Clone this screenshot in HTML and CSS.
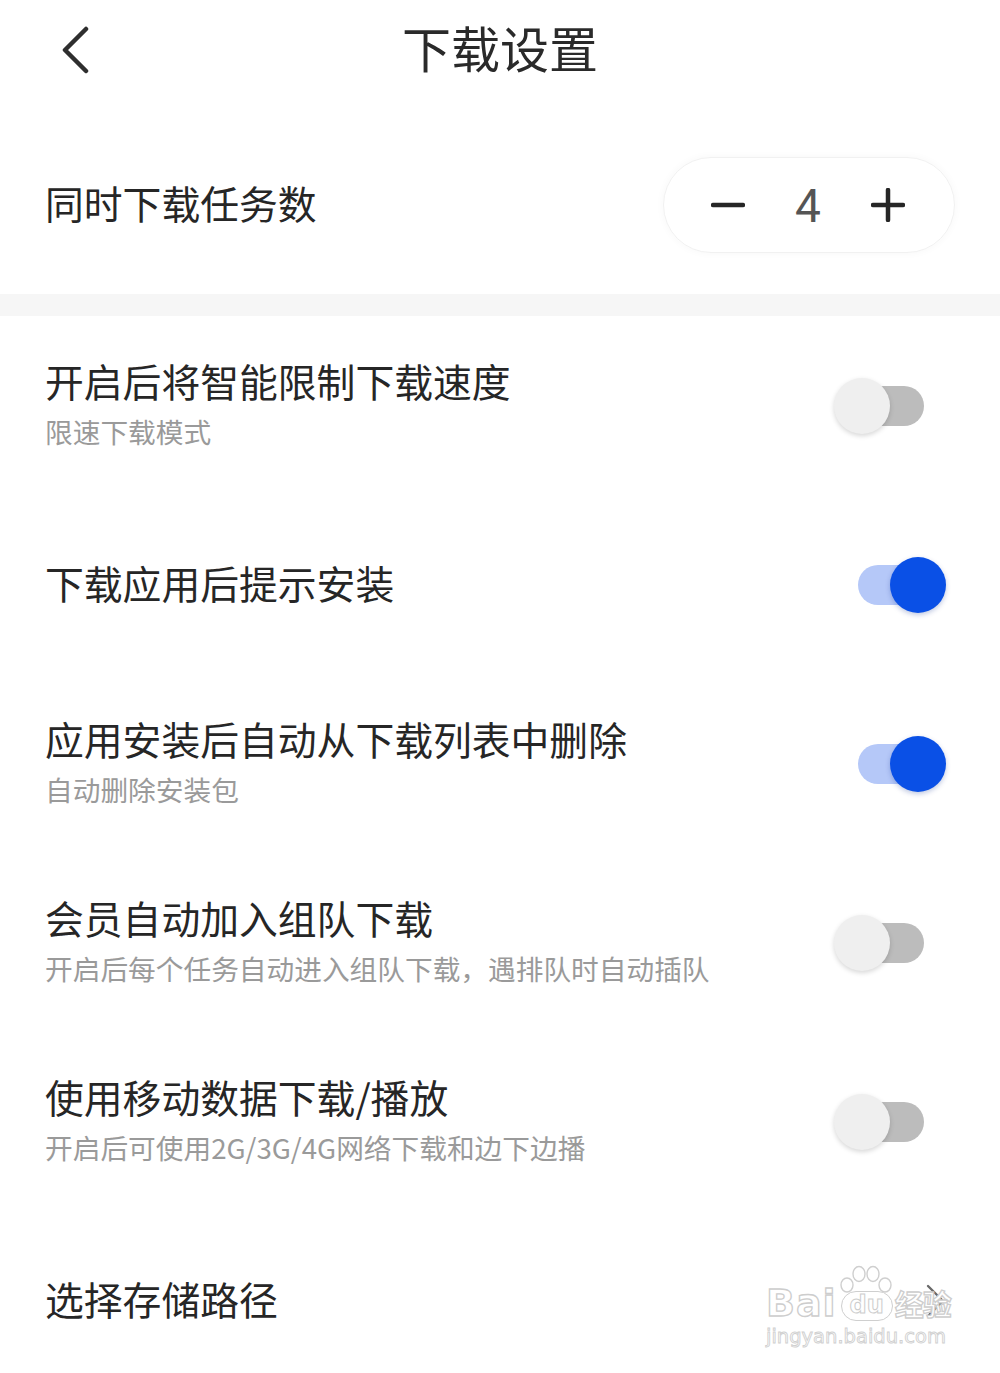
FILE: index.html
```html
<!DOCTYPE html>
<html lang="zh-CN">
<head>
<meta charset="utf-8">
<title>下载设置</title>
<link rel="stylesheet" href="styles.css">
</head>
<body>
<div class="page">
  <header class="topbar">
    <div class="back">
      <svg width="30" height="48" viewBox="0 0 30 48"><path d="M26 3 L5 24 L26 45" fill="none" stroke="#2e2e2e" stroke-width="4.5" stroke-linecap="round" stroke-linejoin="round"/></svg>
    </div>
    <h1 class="title">下载设置</h1>
    <div></div>
  </header>

  <section class="row row-stepper">
    <div class="texts"><div class="label">同时下载任务数</div></div>
    <div class="stepper">
      <svg class="op" width="34" height="34" viewBox="0 0 34 34"><path d="M2 17 H32" stroke="#262626" stroke-width="4.5" stroke-linecap="round"/></svg>
      <span class="count">4</span>
      <svg class="op" width="34" height="34" viewBox="0 0 34 34"><path d="M2 17 H32 M17 2 V32" stroke="#262626" stroke-width="4.5" stroke-linecap="round"/></svg>
    </div>
  </section>

  <div class="divider"></div>

  <section class="row">
    <div class="texts">
      <div class="label">开启后将智能限制下载速度</div>
      <div class="sub">限速下载模式</div>
    </div>
    <div class="toggle"><span class="track"></span><span class="knob"></span></div>
  </section>

  <section class="row">
    <div class="texts">
      <div class="label">下载应用后提示安装</div>
    </div>
    <div class="toggle on"><span class="track"></span><span class="knob"></span></div>
  </section>

  <section class="row">
    <div class="texts">
      <div class="label">应用安装后自动从下载列表中删除</div>
      <div class="sub">自动删除安装包</div>
    </div>
    <div class="toggle on"><span class="track"></span><span class="knob"></span></div>
  </section>

  <section class="row">
    <div class="texts">
      <div class="label">会员自动加入组队下载</div>
      <div class="sub">开启后每个任务自动进入组队下载，遇排队时自动插队</div>
    </div>
    <div class="toggle"><span class="track"></span><span class="knob"></span></div>
  </section>

  <section class="row">
    <div class="texts">
      <div class="label">使用移动数据下载/播放</div>
      <div class="sub">开启后可使用2G/3G/4G网络下载和边下边播</div>
    </div>
    <div class="toggle"><span class="track"></span><span class="knob"></span></div>
  </section>

  <section class="row row-link">
    <div class="texts">
      <div class="label">选择存储路径</div>
    </div>
    <svg class="chev" width="20" height="34" viewBox="0 0 20 34"><path d="M3 2 L18 17 L3 32" fill="none" stroke="#6a6a6a" stroke-width="2.4" stroke-linecap="round" stroke-linejoin="round"/></svg>
    <div class="watermark">
      <div class="wm-top">
        <span class="wm-bai">Bai</span>
        <span class="wm-paw">
          <svg width="58" height="30" viewBox="0 0 58 30"><g fill="#fff" stroke="#cfcfcf" stroke-width="1.4"><ellipse cx="10" cy="20" rx="6" ry="7"/><ellipse cx="22" cy="9" rx="6" ry="7.5"/><ellipse cx="36" cy="9" rx="6" ry="7.5"/><ellipse cx="48" cy="20" rx="6" ry="7"/></g></svg>
          <span class="wm-du">du</span>
        </span>
        <span class="wm-jy">经验</span>
      </div>
      <div class="wm-url">jingyan.baidu.com</div>
    </div>
  </section>
</div>
</body>
</html>
```

FILE: styles.css
```css
* { box-sizing: border-box; }
html, body { margin: 0; padding: 0; background: #fff; }
body {
  font-family: "Noto Sans CJK SC", "Noto Sans", "Liberation Sans", sans-serif;
  color: #262626;
  width: 1000px;
  height: 1373px;
  overflow: hidden;
}
.page { width: 1000px; }

.topbar {
  height: 100px;
  display: grid;
  grid-template-columns: 1fr auto 1fr;
  align-items: center;
}
.back { padding-left: 60px; display: flex; align-items: center; }
.title {
  margin: 0 0 6px 0;
  font-size: 49px;
  font-weight: 400;
  color: #2a2a2a;
  line-height: 60px;
}

.row {
  height: 179px;
  display: flex;
  align-items: center;
  justify-content: space-between;
  padding: 0 54px 0 45px;
  position: relative;
}
.row-stepper {
  height: 194px;
  padding: 57px 45px 41px 45px;
}
.texts { display: flex; flex-direction: column; margin-bottom: 6px; }
.label {
  font-size: 38.8px;
  line-height: 50px;
  color: #262626;
  white-space: nowrap;
}
.sub {
  font-size: 27.7px;
  line-height: 40px;
  margin-top: 6px;
  color: #9a9a9a;
  white-space: nowrap;
}

.stepper {
  width: 292px;
  height: 96px;
  border-radius: 48px;
  border: 1px solid #f1f1f1;
  box-shadow: 0 0 8px rgba(0,0,0,0.035);
  display: flex;
  align-items: center;
  padding: 0 49px 0 47px;
  justify-content: space-between;
}
.op { display: block; }
.count {
  font-family: "Roboto", "Liberation Sans", sans-serif;
  font-size: 46px;
  color: #555;
  line-height: 1;
  margin-top: 2px;
}

.divider {
  height: 22px;
  background: #f6f6f6;
}

.toggle {
  position: relative;
  width: 112px;
  height: 56px;
  flex: none;
}
.toggle .track {
  position: absolute;
  left: 18px;
  top: 8px;
  width: 72px;
  height: 40px;
  border-radius: 20px;
  background: #bcbcbc;
}
.toggle .knob {
  position: absolute;
  left: 0;
  top: 0;
  width: 56px;
  height: 56px;
  border-radius: 50%;
  background: #efefef;
  box-shadow: 0 2px 5px rgba(0,0,0,0.16);
}
.toggle.on .track { left: 24px; background: #b5c8f8; }
.toggle.on .knob { left: 56px; background: #0a50e6; box-shadow: 0 2px 5px rgba(0,40,140,0.25); }

.row-link { padding-right: 55px; }
.chev { display: block; }

.watermark {
  position: absolute;
  left: 766px;
  top: 54px;
  pointer-events: none;
}
.wm-top { display: flex; align-items: flex-end; height: 58px; }
.wm-bai, .wm-du, .wm-jy {
  color: #fff;
  -webkit-text-stroke: 1.3px #cdcdcd;
  font-family: "DejaVu Sans", "Liberation Sans", sans-serif;
  font-weight: 700;
}
.wm-bai { font-size: 38px; line-height: 40px; letter-spacing: 1px; }
.wm-paw { position: relative; display: inline-block; width: 58px; height: 58px; }
.wm-paw svg { position: absolute; left: 0; top: 0; }
.wm-du {
  position: absolute;
  left: 4px;
  bottom: 2px;
  width: 52px;
  height: 30px;
  border: 1.4px solid #cfcfcf;
  border-radius: 15px;
  background: #fff;
  -webkit-text-stroke: 1px #cdcdcd;
  font-size: 24px;
  line-height: 26px;
  text-align: center;
}
.wm-jy {
  font-family: "Noto Sans CJK SC", sans-serif;
  font-size: 29px;
  line-height: 40px;
  margin-left: 0;
  letter-spacing: -1px;
}
.wm-url {
  font-family: "DejaVu Sans", "Liberation Sans", sans-serif;
  font-size: 19.5px;
  line-height: 24px;
  color: #fff;
  -webkit-text-stroke: 0.9px #d0d0d0;
  margin-top: 2px;
}
```
